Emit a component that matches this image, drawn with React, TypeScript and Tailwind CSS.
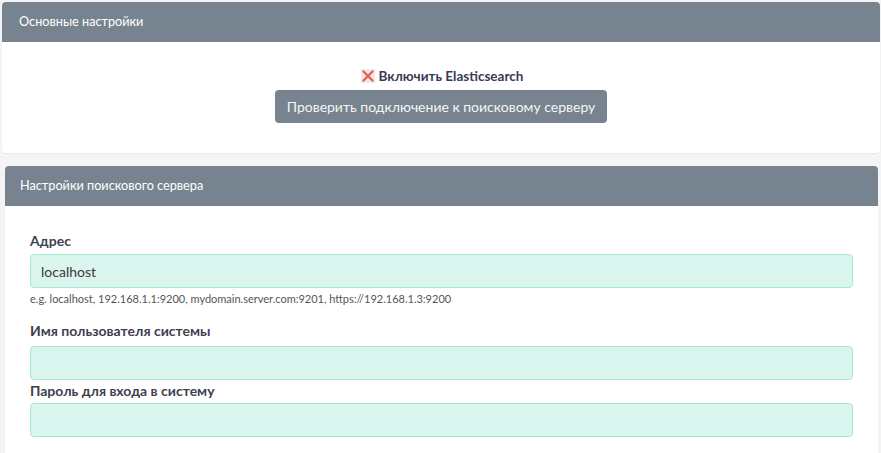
export default function App() {
  return (
    <div className="min-h-[453px] bg-[#f4f4f4] pt-[2px] font-['Lato','Liberation_Sans',sans-serif]">
      <section className="ml-[2px] w-[878px] rounded-[4px] bg-white shadow-[0_1px_1px_rgba(0,0,0,0.06)]">
        <div className="flex h-[40px] items-center rounded-t-[4px] bg-[#77848f] pl-[17px] text-[12.7px] text-white">
          Основные настройки
        </div>
        <div className="flex h-[111px] flex-col items-center pt-[25px]">
          <label className="flex h-[18px] items-center gap-[4px] pl-[2px] text-[13.5px] font-bold text-[#3b3a55]">
            <span className="flex h-[14px] w-[14px] items-center justify-center bg-[#efe9e9]">
              <svg width="12" height="12" viewBox="0 0 12 12">
                <path d="M1.5 1.5 L10.5 10.5 M10.5 1.5 L1.5 10.5" stroke="#e8604f" strokeWidth="2.4" strokeLinecap="round" />
              </svg>
            </span>
            Включить Elasticsearch
          </label>
          <button className="mt-[5px] h-[33px] rounded-[4px] bg-[#77848f] px-[12px] text-[14px] text-[#f4f6f8]">
            Проверить подключение к поисковому серверу
          </button>
        </div>
      </section>

      <section className="ml-[5px] mt-[13px] w-[873px] rounded-t-[4px] bg-white">
        <div className="flex h-[40px] items-center rounded-t-[4px] bg-[#77848f] pl-[15px] text-[12.7px] text-white">
          Настройки поискового сервера
        </div>
        <div className="px-[25px] pt-[25px] pb-[16px]">
          <div className="text-[14px] font-bold leading-[20px] text-[#3f3f4f]">Адрес</div>
          <input
            defaultValue="localhost"
            className="mt-[3px] block h-[34px] w-[823px] rounded-[4px] border border-[#a6e9d2] bg-[#daf5ed] px-[10px] text-[14px] text-[#3a3a3a] outline-none"
          />
          <div className="mt-[4px] text-[11px] leading-[14px] text-[#555]">
            e.g. localhost, 192.168.1.1:9200, mydomain.server.com:9201, https://192.168.1.3:9200
          </div>
          <div className="mt-[15px] text-[14px] font-bold leading-[20px] text-[#3f3f4f]">Имя пользователя системы</div>
          <input className="mt-[5px] block h-[34px] w-[823px] rounded-[4px] border border-[#a6e9d2] bg-[#daf5ed] px-[10px] text-[14px] outline-none" />
          <div className="mt-[1px] text-[14px] font-bold leading-[20px] text-[#3f3f4f]">Пароль для входа в систему</div>
          <input
            type="password"
            className="mt-[2px] block h-[34px] w-[823px] rounded-[4px] border border-[#a6e9d2] bg-[#daf5ed] px-[10px] text-[14px] outline-none"
          />
        </div>
      </section>
    </div>
  );
}
